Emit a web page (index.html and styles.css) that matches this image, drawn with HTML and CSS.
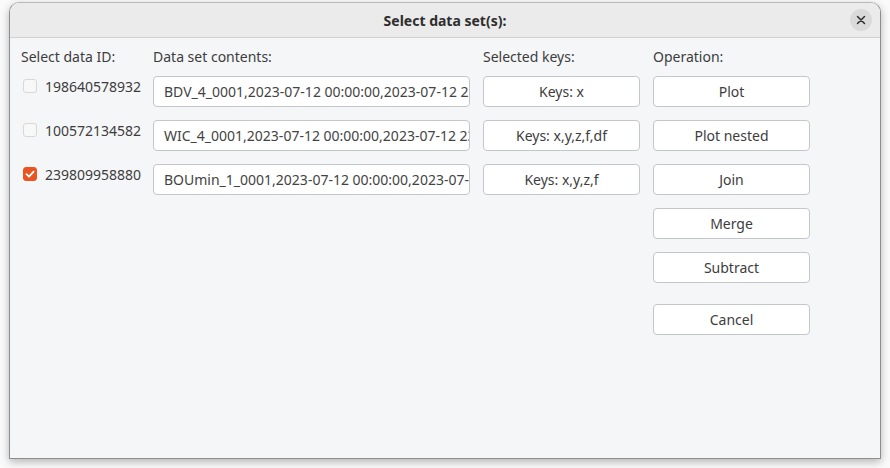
FILE: index.html
```html
<!DOCTYPE html>
<html>
<head>
<meta charset="utf-8">
<link rel="stylesheet" href="styles.css">
</head>
<body>
<div class="window">
  <div class="titlebar">
    <span class="title">Select data set(s):</span>
    <button class="close" aria-label="Close">
      <svg width="10" height="10" viewBox="0 0 10 10"><path d="M1.5 1.5 L8.5 8.5 M8.5 1.5 L1.5 8.5" stroke="#2e2e2e" stroke-width="1.5" stroke-linecap="round"/></svg>
    </button>
  </div>
  <div class="content">
    <div class="grid head">
      <div class="hdr">Select data ID:</div>
      <div class="hdr">Data set contents:</div>
      <div class="hdr">Selected keys:</div>
      <div class="hdr">Operation:</div>
    </div>
    <div class="grid rows">
      <label class="idcell"><span class="cb"></span><span>198640578932</span></label>
      <div class="field">BDV_4_0001,2023-07-12 00:00:00,2023-07-12 23:59:00</div>
      <button class="btn">Keys: x</button>
      <button class="btn">Plot</button>

      <label class="idcell"><span class="cb"></span><span>100572134582</span></label>
      <div class="field">WIC_4_0001,2023-07-12 00:00:00,2023-07-12 23:59:00</div>
      <button class="btn">Keys: x,y,z,f,df</button>
      <button class="btn">Plot nested</button>

      <label class="idcell"><span class="cb checked"><svg width="10" height="10" viewBox="0 0 10 10"><path d="M1.5 5.2 L4 7.6 L8.6 2.6" fill="none" stroke="#fff" stroke-width="1.8" stroke-linecap="round" stroke-linejoin="round"/></svg></span><span>239809958880</span></label>
      <div class="field">BOUmin_1_0001,2023-07-12 00:00:00,2023-07-12 23:59:00</div>
      <button class="btn">Keys: x,y,z,f</button>
      <button class="btn">Join</button>

      <button class="btn op">Merge</button>
      <button class="btn op">Subtract</button>
      <button class="btn op cancel">Cancel</button>
    </div>
  </div>
</div>
</body>
</html>
```
FILE: styles.css
```css
html, body {
  margin: 0;
  padding: 0;
  background: #fafafa;
}
body {
  width: 890px;
  height: 468px;
  overflow: hidden;
  font-family: "Noto Sans", "DejaVu Sans", sans-serif;
  font-size: 14px;
  color: #3d3d3d;
}
.window {
  margin: 2px 0 0 9px;
  width: 870px;
  height: 455px;
  border: 1px solid #8e8e8e;
  border-top-color: #b8b8b8;
  border-radius: 10px 10px 0 0;
  background: #f5f6f7;
  box-shadow: 0 3px 9px rgba(0,0,0,0.28);
  overflow: hidden;
  display: flex;
  flex-direction: column;
}
.titlebar {
  height: 34px;
  flex: none;
  background: #ebebeb;
  border-bottom: 1px solid #d2d2d2;
  display: flex;
  align-items: center;
  justify-content: center;
  position: relative;
}
.title {
  font-weight: bold;
  color: #2e2e2e;
  font-size: 14px;
}
.close {
  position: absolute;
  right: 8px;
  top: 6px;
  width: 22px;
  height: 22px;
  border-radius: 50%;
  border: none;
  background: #dadada;
  padding: 0;
  display: flex;
  align-items: center;
  justify-content: center;
}
.content {
  padding: 9px 0 0 10px;
}
.grid {
  display: grid;
  grid-template-columns: 120px 317px 157px 157px;
  column-gap: 13px;
}
.head {
  height: 20px;
  line-height: 20px;
  margin-bottom: 9px;
}
.hdr {
  white-space: nowrap;
}
.head .hdr:first-child { padding-left: 1px; }
.rows {
  grid-auto-rows: 31px;
  row-gap: 13px;
}
.idcell {
  display: flex;
  align-items: center;
  gap: 8px;
  height: 20px;
  margin-top: 0px;
  padding-left: 3px;
  white-space: nowrap;
}
.cb {
  width: 12px;
  height: 12px;
  border: 1px solid #d8d8d8;
  border-radius: 3px;
  background: #f8f8f8;
  flex: none;
  display: flex;
  align-items: center;
  justify-content: center;
}
.cb.checked {
  background: #e95420;
  border-color: #e95420;
}
.field {
  box-sizing: border-box;
  height: 31px;
  background: #fff;
  border: 1px solid #c3c6cb;
  border-radius: 4px;
  padding: 0 10px;
  line-height: 29px;
  white-space: nowrap;
  overflow: hidden;
  color: #434343;
}
.btn {
  box-sizing: border-box;
  height: 31px;
  background: #fff;
  border: 1px solid #c3c6cb;
  border-radius: 4px;
  font: inherit;
  color: #3d3d3d;
  padding: 0;
  text-align: center;
}
.op {
  grid-column: 4;
}
.cancel {
  margin-top: 8px;
}
```
